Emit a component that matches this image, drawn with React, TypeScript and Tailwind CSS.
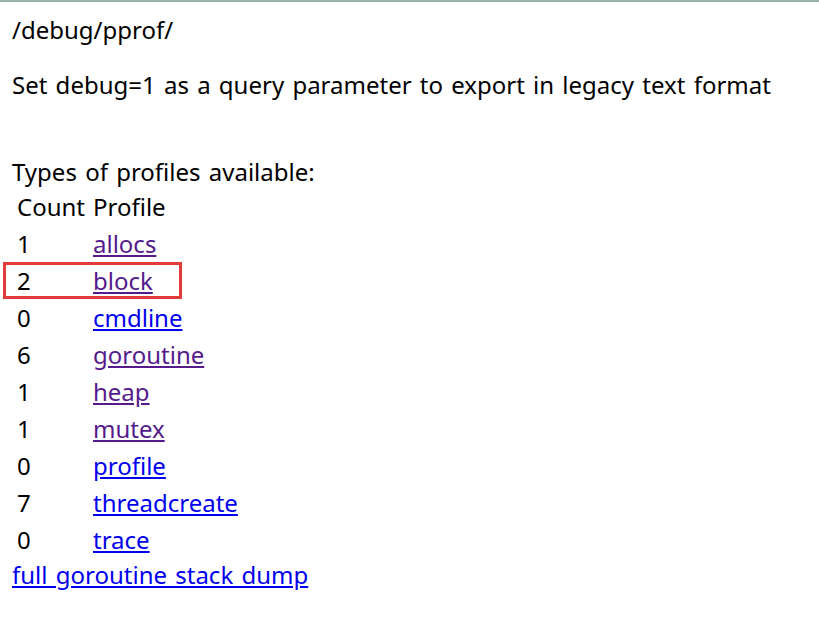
const rows: { count: number; name: string; visited: boolean }[] = [
  { count: 1, name: "allocs", visited: true },
  { count: 2, name: "block", visited: true },
  { count: 0, name: "cmdline", visited: false },
  { count: 6, name: "goroutine", visited: true },
  { count: 1, name: "heap", visited: true },
  { count: 1, name: "mutex", visited: true },
  { count: 0, name: "profile", visited: false },
  { count: 7, name: "threadcreate", visited: false },
  { count: 0, name: "trace", visited: false },
];

export default function App() {
  return (
    <div
      className="min-h-[617px] w-[819px] border-t-2 border-[#98b5ad] bg-white text-[24px] text-black [word-spacing:2px]"
      style={{ fontFamily: '"Noto Sans", "Open Sans", sans-serif' }}
    >
      <div className="px-3 pt-[10px]">
        <div className="leading-[36px]">/debug/pprof/</div>
        <p className="mt-[19px] leading-[36px]">Set debug=1 as a query parameter to export in legacy text format</p>
        <p className="mt-[51px] leading-[36px]">Types of profiles available:</p>
        <div className="-mt-[2px] flex flex-col pl-[5px]">
          <div className="flex h-[37px] items-center">
            <span className="w-[76px] whitespace-nowrap">Count</span>
            <span>Profile</span>
          </div>
          {rows.map((r) => (
            <div
              key={r.name}
              className={
                r.name === "block"
                  ? "-mx-[14px] flex h-[37px] w-[179px] items-center border-[3px] border-[#e23b3b] px-[11px]"
                  : "flex h-[37px] items-center"
              }
            >
              <span className="w-[76px]">{r.count}</span>
              <a
                href="#"
                className={r.visited ? "text-[#551a8b] underline" : "text-[#0000ee] underline"}
              >
                {r.name}
              </a>
            </div>
          ))}
        </div>
        <a href="#" className="-mt-[1px] block leading-[36px] text-[#0000ee] underline">
          full goroutine stack dump
        </a>
      </div>
    </div>
  );
}
